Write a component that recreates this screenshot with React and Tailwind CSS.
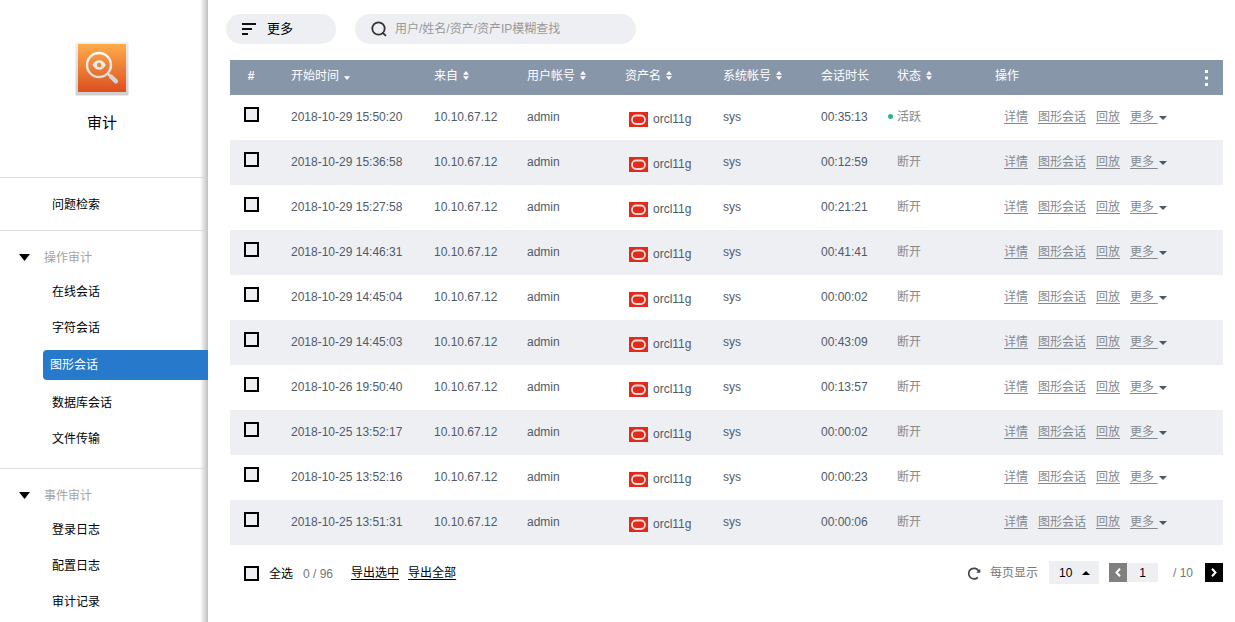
import { useState } from "react";

const menu = [
  {
    title: "操作审计",
    items: ["在线会话", "字符会话", "图形会话", "数据库会话", "文件传输"],
  },
  {
    title: "事件审计",
    items: ["登录日志", "配置日志", "审计记录"],
  },
];

const columns = [
  { label: "开始时间", width: "w-[143px]", sort: "desc" },
  { label: "来自", width: "w-[93px]", sort: "both" },
  { label: "用户帐号", width: "w-[98px]", sort: "both" },
  { label: "资产名", width: "w-[98px]", sort: "both" },
  { label: "系统帐号", width: "w-[98px]", sort: "both" },
  { label: "会话时长", width: "w-[76px]" },
  { label: "状态", width: "w-[98px]", sort: "both" },
];

const sessions = [
  { start: "2018-10-29 15:50:20", duration: "00:35:13", active: true },
  { start: "2018-10-29 15:36:58", duration: "00:12:59" },
  { start: "2018-10-29 15:27:58", duration: "00:21:21" },
  { start: "2018-10-29 14:46:31", duration: "00:41:41" },
  { start: "2018-10-29 14:45:04", duration: "00:00:02" },
  { start: "2018-10-29 14:45:03", duration: "00:43:09" },
  { start: "2018-10-26 19:50:40", duration: "00:13:57" },
  { start: "2018-10-25 13:52:17", duration: "00:00:02" },
  { start: "2018-10-25 13:52:16", duration: "00:00:23" },
  { start: "2018-10-25 13:51:31", duration: "00:00:06" },
];

const AuditLogo = () => (
  <svg className="h-[54px] w-[54px]" viewBox="0 0 54 54" aria-hidden="true">
    <defs>
      <linearGradient id="tile" x1="0" y1="0" x2="0" y2="1">
        <stop offset="0" stopColor="#ffac4a" />
        <stop offset="1" stopColor="#dc4f20" />
      </linearGradient>
      <linearGradient id="frame" x1="0" y1="0" x2="0" y2="1">
        <stop offset="0" stopColor="#ececec" />
        <stop offset="1" stopColor="#cfcfcf" />
      </linearGradient>
      <linearGradient id="glass" gradientUnits="userSpaceOnUse" x1="0" y1="10" x2="0" y2="42">
        <stop offset="0" stopColor="#ffffff" />
        <stop offset="1" stopColor="#cfcfcf" />
      </linearGradient>
    </defs>
    <rect x="0.5" y="0.5" width="53" height="53" rx="1" fill="url(#frame)" />
    <rect x="3" y="2" width="48" height="48" fill="url(#tile)" />
    <circle cx="24" cy="23" r="12" fill="none" stroke="url(#glass)" strokeWidth="2.4" />
    <path
      fillRule="evenodd"
      fill="url(#glass)"
      d="M17.5 23c1.6-3 4-4.8 6.7-4.8S29.2 20 30.800 23c-1.600 3-3.900 4.800-6.600 4.800S19.100 26 17.500 23Zm6.700-2.300a2.300 2.300 0 1 0 0 4.600 2.300 2.300 0 0 0 0-4.600Z"
    />
    <path d="M32.500 31.500l3.500 3" stroke="url(#glass)" strokeWidth="2.400" />
    <path d="M36 34.500l5 4.800" stroke="#d5d3d3" strokeWidth="4.400" strokeLinecap="round" />
  </svg>
);

const OracleIcon = () => (
  <svg className="h-[15px] w-[19px]" viewBox="0 0 19 15" aria-hidden="true">
    <rect width="19" height="15" fill="#e02b1c" />
    <rect x="3" y="3.5" width="13" height="8.5" rx="4.2" fill="none" stroke="#fbd9d5" strokeWidth="1.8" />
  </svg>
);

const SortIcon = ({ sort }) => (
  <svg className="h-[9px] w-[6px] fill-white" viewBox="0 0 6 9" aria-hidden="true">
    {sort === "both" && <path d="M3 0l3 3.800H0z" />}
    <path d="M0 5.200h6L3 9z" />
  </svg>
);

const Caret = ({ className, up }) => (
  <svg className={className} viewBox="0 0 8 4" preserveAspectRatio="none" aria-hidden="true">
    <path d={up ? "M0 4h8L4 0z" : "M0 0h8L4 4z"} fill="currentColor" />
  </svg>
);

const Checkbox = (props) => (
  <input
    type="checkbox"
    className="block h-[15px] w-[15px] shrink-0 appearance-none border-2 border-black bg-[#eeeff3] checked:bg-[#2779cb]"
    {...props}
  />
);

const Sidebar = () => (
  <aside className="w-[208px] shrink-0 bg-gradient-to-l from-black/25 to-transparent bg-[length:8px_100%] bg-right bg-no-repeat text-black">
    <div className="flex h-[177px] flex-col items-center pt-[42px] pr-1">
      <AuditLogo />
      <h1 className="mt-[15px] text-[15px] leading-6">审计</h1>
    </div>

    <nav>
      <div className="border-y border-[#d4d5da]/80 pt-[9px] pb-[7px]">
        <a href="#search" className="block pl-[52px] leading-9">
          问题检索
        </a>
      </div>

      {menu.map((group, index) => (
        <section
          key={group.title}
          className={index === 0 ? "border-b border-[#d4d5da]/80 pb-[11px]" : ""}
        >
          <h2 className="flex h-[43px] items-center pt-[10px] text-[#a3a3a3]">
            <Caret className="mr-[14px] ml-[19px] h-[7px] w-[11px] text-black" />
            {group.title}
          </h2>
          <ul>
            {group.items.map((item) => (
              <li key={item}>
                {item === "图形会话" ? (
                  <a
                    href="#session"
                    className="mt-1 mb-[5px] ml-[43px] block rounded-l-sm bg-[#2779cb] pl-[7px] leading-[30px] text-white"
                  >
                    {item}
                  </a>
                ) : (
                  <a href="#item" className="block pl-[52px] leading-9">
                    {item}
                  </a>
                )}
              </li>
            ))}
          </ul>
        </section>
      ))}
    </nav>
  </aside>
);

const Toolbar = () => (
  <div className="-ml-1 flex gap-[19px]">
    <button className="flex h-[30px] w-[110px] items-center rounded-full bg-[#eeeff3] pl-4 text-[13px] text-black">
      <svg className="mr-[11px] h-3 w-[14px]" viewBox="0 0 14 12" aria-hidden="true">
        <path d="M0 1h14M0 6h10M0 11h6" stroke="#111" strokeWidth="2" />
      </svg>
      更多
    </button>

    <label className="flex h-[30px] w-[281px] items-center rounded-full bg-[#eeeff3] pl-4">
      <svg className="mr-2 h-4 w-4" viewBox="0 0 16 16" fill="none" stroke="#333" strokeWidth="1.8" aria-hidden="true">
        <circle cx="7.500" cy="7.500" r="6.200" />
        <path d="M11.800 11.800l3.200 3" />
      </svg>
      <input
        className="min-w-0 flex-1 bg-transparent outline-none placeholder:text-[#999]"
        aria-label="查找"
        placeholder="用户/姓名/资产/资产IP模糊查找"
      />
    </label>
  </div>
);

const SessionTable = () => (
  <table className="mt-4 w-full table-fixed text-left text-[#505b69]">
    <thead className="bg-[#8896a9] text-white">
      <tr className="h-[35px]">
        <th className="w-[53px] pr-[11px] pb-1 text-center">#</th>
        {columns.map((col) => (
          <th key={col.label} className={`${col.width} pb-1 pl-2 font-normal`}>
            <span className="flex items-center gap-[5px] whitespace-nowrap">
              {col.label}
              {col.sort && <SortIcon sort={col.sort} />}
            </span>
          </th>
        ))}
        <th className="w-[236px] pl-2 font-normal">
          <div className="flex items-center justify-between pr-[15px]">
            <span className="pb-1">操作</span>
            <button aria-label="列设置">
              <svg className="h-4 w-[3px] fill-white" viewBox="0 0 3 16">
                <path d="M0 0h3v3H0zM0 6.500h3v3H0zM0 13h3v3H0z" />
              </svg>
            </button>
          </div>
        </th>
      </tr>
    </thead>
    <tbody>
      {sessions.map((row) => (
        <tr key={row.start} className="h-[45px] even:bg-[#eeeff3]">
          <td className="pb-[6px] pl-[14px]">
            <Checkbox aria-label={row.start} />
          </td>
          <td className="pb-[2px] pl-2 whitespace-nowrap">{row.start}</td>
          <td className="pb-[2px] pl-2">10.10.67.12</td>
          <td className="pb-[2px] pl-2">admin</td>
          <td className="pt-[3px] pl-3">
            <span className="flex items-center gap-[5px]">
              <OracleIcon />
              orcl11g
            </span>
          </td>
          <td className="pb-[2px] pl-2">sys</td>
          <td className="pb-[2px] pl-2">{row.duration}</td>
          <td className="pb-[2px] text-[#888]">
            <span className="flex items-center">
              <i
                className={`mr-1 ml-[-1px] h-[5px] w-[5px] rounded-full ${row.active ? "bg-[#2bb68a]" : ""}`}
              />
              {row.active ? "活跃" : "断开"}
            </span>
          </td>
          <td className="pb-[2px] pl-[17px]">
            <div className="flex gap-[10px] whitespace-nowrap text-[#82898f] underline underline-offset-2">
              <a href="#detail">详情</a>
              <a href="#graph">图形会话</a>
              <a href="#replay">回放</a>
              <button className="flex items-center gap-[2px] text-[#82898f]">
                <span className="whitespace-pre underline underline-offset-2">更多 </span>
                <Caret className="mt-[2px] h-1 w-2 text-[#4a5868]" />
              </button>
            </div>
          </td>
        </tr>
      ))}
    </tbody>
  </table>
);

const Footer = () => {
  const [page, setPage] = useState("1");

  return (
    <div className="mt-4 flex items-center pl-[14px] text-[#777]">
      <label className="flex items-center gap-[10px] pt-[2px] text-black">
        <Checkbox />
        全选
      </label>
      <span className="ml-[10px] pt-[2px]">0 / 96</span>
      <div className="ml-[18px] flex gap-[9px] text-black underline underline-offset-2">
        <a href="#selected">导出选中</a>
        <a href="#all">导出全部</a>
      </div>

      <div className="ml-auto flex items-center">
        <button aria-label="刷新" className="mr-[9px]">
          <svg className="h-[14px] w-[14px]" viewBox="0 0 14 14" fill="none" aria-hidden="true">
            <path d="M10.800 11.300A5.300 5.300 0 1 1 11.600 5" stroke="#444" strokeWidth="1.700" />
            <path d="M13.300 2.800v4H9.300z" fill="#444" />
          </svg>
        </button>
        <label htmlFor="perPage">每页显示</label>
        <div className="relative ml-[11px]">
          <select
            id="perPage"
            className="block h-[23px] w-[50px] appearance-none bg-[#eeeff3] pl-[10px] text-black"
          >
            <option>10</option>
            <option>20</option>
            <option>50</option>
          </select>
          <Caret up className="pointer-events-none absolute top-[10px] right-[9px] h-1 w-2 text-black" />
        </div>
        <button
          aria-label="上一页"
          className="ml-[10px] flex h-[19px] w-[18px] items-center justify-center bg-[#808080]"
        >
          <svg className="h-[9px] w-[6px]" viewBox="0 0 6 9" fill="none" stroke="#fff" strokeWidth="2">
            <path d="M5 0.700L1.500 4.500 5 8.300" />
          </svg>
        </button>
        <input
          aria-label="页码"
          className="h-[19px] w-[31px] bg-[#eeeff3] text-center text-black outline-none"
          value={page}
          onChange={(e) => setPage(e.target.value)}
        />
        <span className="ml-[15px]">/ 10</span>
        <button
          aria-label="下一页"
          className="ml-3 flex h-[19px] w-[18px] items-center justify-center bg-black"
        >
          <svg className="h-[9px] w-[6px]" viewBox="0 0 6 9" fill="none" stroke="#fff" strokeWidth="2">
            <path d="M1 0.700L4.500 4.500 1 8.300" />
          </svg>
        </button>
      </div>
    </div>
  );
};

const App = () => (
  <div className="flex min-h-screen bg-white font-['Liberation_Sans','Noto_Sans_CJK_SC',sans-serif] text-[12px] leading-4">
    <Sidebar />
    <main className="min-w-0 flex-1 pt-[14px] pr-3 pl-[22px]">
      <Toolbar />
      <SessionTable />
      <Footer />
    </main>
  </div>
);

export default App;
